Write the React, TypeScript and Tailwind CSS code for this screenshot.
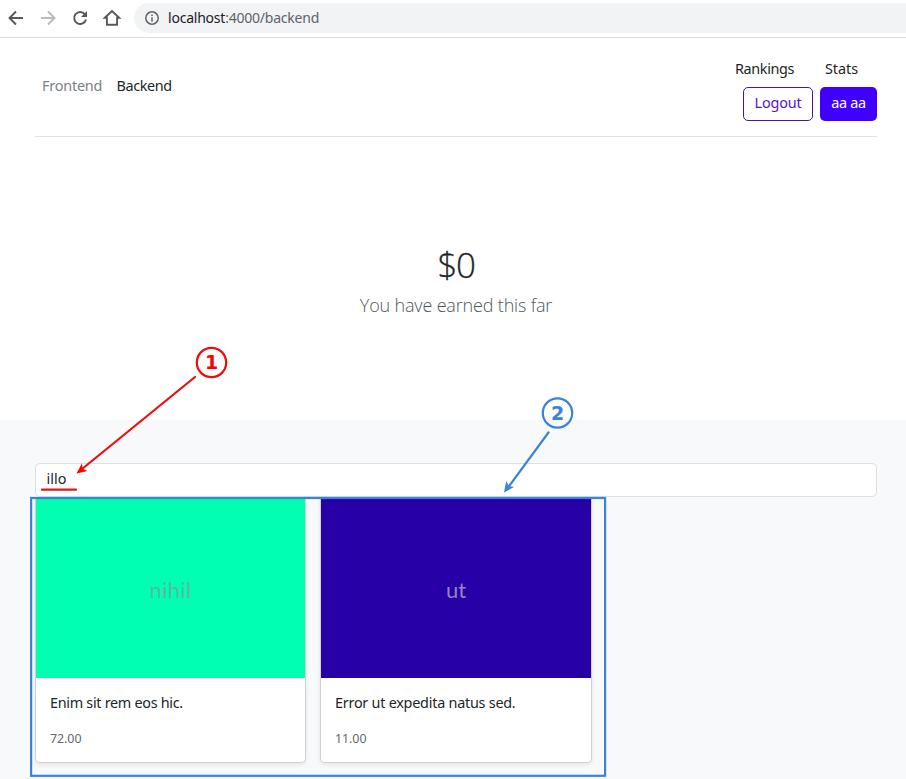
import React from "react";

type CardProps = {
  image: string;
  imageColor: string;
  labelColor: string;
  title: React.ReactNode;
  price: string;
};

function ProductCard({ image, imageColor, labelColor, title, price }: CardProps) {
  return (
    <article className="flex h-[265px] flex-col overflow-hidden rounded-b-[5px] border border-t-0 border-[#cfd1d4] bg-white shadow-[0_2px_4px_rgba(0,0,0,0.08)]">
      <div className={`flex h-[180px] shrink-0 items-center justify-center ${imageColor}`}>
        <span className={`mt-[4px] leading-7 ${labelColor}`}>{image}</span>
      </div>
      <div className="flex flex-col pl-[14px] pt-[14px]">
        <p className="whitespace-nowrap text-[14.4px] leading-[22px] tracking-[-0.24px] text-[#212529]">{title}</p>
        <p className="mt-[16px] text-[12.4px] leading-[18px] tracking-[-0.05px] text-[#62686e]">{price}</p>
      </div>
    </article>
  );
}

function BrowserBar() {
  return (
    <div className="flex h-[38px] items-start border-b border-[#dadce0]">
      <svg className="h-[37px] w-[134px] shrink-0" viewBox="0 0 134 37" fill="none" strokeWidth="1.9">
        <path d="M23 18H10M16 11.5L9.5 18L16 24.5" stroke="#55585c" />
        <path d="M41 18H54M48 11.5L54.5 18L48 24.5" stroke="#b8babd" />
        <path d="M84.9 14.3A6 6 0 1 0 86 19.5" stroke="#55585c" />
        <path d="M87 11V17H81Z" fill="#55585c" />
        <path d="M104.8 17.8L112 11.1L119.2 17.8H117.1V24.8H106.9V17.8Z" stroke="#55585c" />
      </svg>
      <div className="mt-[3px] flex h-[30px] flex-1 items-center rounded-l-full bg-[#f1f3f4] pl-[11px]">
        <svg className="size-[14px] shrink-0" viewBox="0 0 14 14" fill="none" stroke="#5f6368" strokeWidth="1.5">
          <circle cx="7" cy="7" r="6.2" />
          <path d="M7 6.2V10.5M7 3.5V5" />
        </svg>
        <span className="mb-[2px] ml-[9px] whitespace-nowrap text-[14px] tracking-[-0.22px] text-[#5f6368]">
          <span className="text-[#202124]">localhost</span>:4000/backend
        </span>
      </div>
    </div>
  );
}

function Header() {
  return (
    <header className="ml-[35px] mr-[29px] flex h-[99px] items-center justify-between border-b border-[#dee2e6] text-[14.4px] leading-[22px]">
      <nav className="mb-[2px] flex gap-[14.5px] pl-[7px]">
        <a className="w-[60px] whitespace-nowrap tracking-[-0.2px] text-[#7a8086]">Frontend</a>
        <a className="whitespace-nowrap tracking-[-0.4px] text-[#212529]">Backend</a>
      </nav>
      <div className="flex h-full flex-col items-end pt-5 text-[#212529]">
        <div className="flex gap-[30px] pr-[18px]">
          <a className="w-[60px] whitespace-nowrap tracking-[-0.35px]">Rankings</a>
          <a className="w-[34px] tracking-[-0.05px]">Stats</a>
        </div>
        <div className="mt-[7px] flex gap-[7px]">
          <button className="h-[34px] w-[70px] rounded-[5px] border border-[#461a9c] pb-[2px] tracking-[-0.15px] text-[#5a12cf]">Logout</button>
          <button className="h-[34px] w-[57px] rounded-[5px] bg-[#4000ff] pb-[2px] tracking-[-0.35px] text-white">aa aa</button>
        </div>
      </div>
    </header>
  );
}

function Annotations() {
  return (
    <svg className="pointer-events-none absolute inset-0 h-[779px] w-[906px]" viewBox="0 0 906 779" fill="none">
      <g stroke="#ee0c0c" strokeWidth="2.2" strokeLinecap="round">
        <circle cx="211.5" cy="362.5" r="14.7" />
        <path d="M195 377L82 469" />
        <path d="M42 489.7H76" stroke="#d41a1f" />
      </g>
      <path d="M76.5 473.5L82 463.3L82.6 468.7L87.5 471Z" fill="#ff0000" />
      <g stroke="#3b82db" strokeWidth="2.2" strokeLinecap="round">
        <circle cx="557.5" cy="413" r="14.7" />
        <path d="M548.5 432.5L508 487.5" />
      </g>
      <path d="M504 492.5L506.2 481L508.8 486L514 487Z" fill="#3b82db" />
      <rect x="31.1" y="498" width="574" height="277.8" stroke="#3b82db" strokeWidth="2.2" />
      <g fontFamily="DejaVu Sans, sans-serif" fontWeight="700" fontSize="19" textAnchor="middle">
        <text x="211.5" y="369" fill="#ff0000">1</text>
        <text x="557.5" y="420" fill="#3b82db">2</text>
      </g>
    </svg>
  );
}

export default function App() {
  return (
    <main className="relative h-[779px] w-[906px] overflow-hidden bg-white font-['Noto_Sans','Open_Sans',sans-serif]">
      <BrowserBar />
      <Header />
      <section className="flex h-[283px] flex-col items-center pl-[6px] pt-[104px]">
        <h1 className="font-['Open_Sans',sans-serif] text-[35px] font-light leading-[48px] tracking-[-1.5px] text-[#212529] [-webkit-text-stroke:0.3px_#212529]">$0</h1>
        <p className="mt-[3px] whitespace-nowrap font-['Open_Sans',sans-serif] text-[18px] font-light leading-[27px] tracking-[-0.17px] text-[#50565c]">You have earned this far</p>
      </section>
      <section className="h-[359px] bg-[#f8f9fb] pl-[35px] pr-[29px] pt-[43px]">
        <div className="flex h-[34px] items-center rounded-[5px] border border-[#dcdfe3] bg-white px-[10.5px] pb-[2px] text-[14.4px] tracking-[0.05px] text-[#212529]">illo</div>
        <div className="mt-px grid w-[557px] grid-cols-[271px_272px] gap-[14px]">
          <ProductCard image="nihil" imageColor="bg-[#00ffb1]" labelColor="font-[family-name:Lato] text-[22px] tracking-[0.3px] text-[#55bd9d]" title={<span className="tracking-[-0.3px]">Enim sit rem eos hic.</span>} price="72.00" />
          <ProductCard image="ut" imageColor="bg-[#2700a8]" labelColor="font-[family-name:Lato] text-[22px] text-[#9386bf]" title="Error ut expedita natus sed." price="11.00" />
        </div>
      </section>
      <Annotations />
    </main>
  );
}
